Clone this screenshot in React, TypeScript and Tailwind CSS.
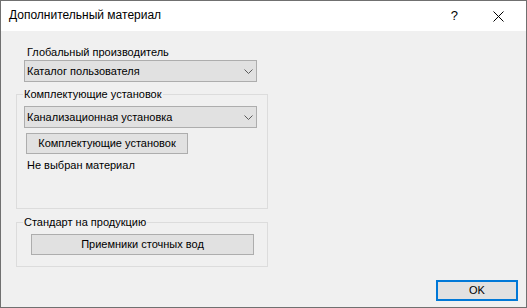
const font = { fontFamily: '"Liberation Sans", Arial, sans-serif' };

const Chevron = () => (
  <svg width="9" height="5" viewBox="0 0 9 5" className="shrink-0">
    <polyline points="0.5,0.5 4.5,4.5 8.5,0.5" fill="none" stroke="#5a5a5a" strokeWidth="1" />
  </svg>
);

const ComboBox = ({ value, className = "" }: { value: string; className?: string }) => (
  <div
    className={`flex h-[22px] w-[233px] items-center justify-between border border-[#adadad] bg-[#e1e1e1] pl-[2px] pr-[3px] text-[11px] leading-[13px] text-black ${className}`}
  >
    <span>{value}</span>
    <Chevron />
  </div>
);

const Button = ({ label, className = "" }: { label: string; className?: string }) => (
  <button
    className={`flex h-[21px] items-center justify-center border border-[#adadad] bg-[#e1e1e1] text-[11px] leading-[13px] text-black ${className}`}
  >
    {label}
  </button>
);

export default function App() {
  return (
    <div
      className="box-border flex h-[308px] w-[527px] flex-col border border-[#707070] bg-[#f0f0f0] text-[11px] leading-[13px] text-black"
      style={font}
    >
      {/* заголовок окна */}
      <div className="flex h-[30px] shrink-0 items-center bg-white pl-[8px] text-[12px] leading-[15px]">
        <span className="pb-[1px]">Дополнительный материал</span>
        <span className="ml-auto mr-[35px] pb-[1px] text-[13px]">?</span>
        <svg width="11" height="11" viewBox="0 0 11 11" className="mr-[22px]">
          <line x1="0.5" y1="0.5" x2="10.5" y2="10.5" stroke="#000" strokeWidth="1" />
          <line x1="10.5" y1="0.5" x2="0.5" y2="10.5" stroke="#000" strokeWidth="1" />
        </svg>
      </div>

      <div className="flex flex-1 flex-col">
        <div className="ml-[15px] flex w-[252px] flex-col">
          <span className="ml-[11px] mt-[15px]">Глобальный производитель</span>
          <ComboBox value="Каталог пользователя" className="ml-[8px] mt-[1px]" />

          <fieldset className="mt-[6px] border border-[#dcdcdc] pb-[36px] pl-[6px]">
            <legend className="px-[1px]">Комплектующие установок</legend>
            <ComboBox value="Канализационная установка" className="ml-[1px] mt-[5px]" />
            <Button label="Комплектующие установок" className="ml-[3px] mt-[5px] w-[162px]" />
            <span className="ml-[4px] mt-[5px] block">Не выбран материал</span>
          </fieldset>

          <fieldset className="mt-[7px] border border-[#dcdcdc] pb-[11px] pl-[6px]">
            <legend className="px-[1px]">Стандарт на продукцию</legend>
            <Button label="Приемники сточных вод" className="ml-[8px] mt-[5px] w-[223px]" />
          </fieldset>
        </div>

        <div className="mb-[6px] mr-[8px] mt-auto flex justify-end">
          <button className="flex h-[21px] w-[82px] items-center justify-center border-2 border-[#0078d7] bg-[#e1e1e1] text-[11px] leading-[13px] text-black">
            OK
          </button>
        </div>
      </div>
    </div>
  );
}
